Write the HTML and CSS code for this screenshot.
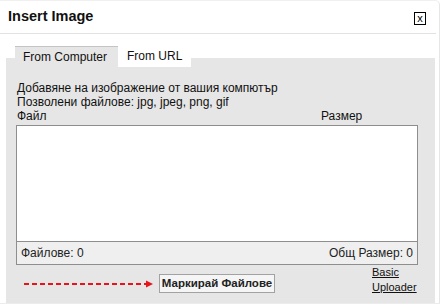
FILE: index.html
```html
<!DOCTYPE html>
<html>
<head>
<meta charset="utf-8">
<title>Insert Image</title>
<link rel="stylesheet" href="styles.css">
</head>
<body>
<div class="dialog">
  <div class="header">
    <div class="title">Insert Image</div>
    <div class="close">x</div>
  </div>
  <div class="body">
    <div class="tabs">
      <div class="tab tab-active">From Computer</div>
      <div class="tab tab-inactive">From URL</div>
    </div>
    <div class="panel">
      <div class="line">Добавяне на изображение от вашия компютър</div>
      <div class="line">Позволени файлове: jpg, jpeg, png, gif</div>
      <div class="cols">
        <span class="col-name">Файл</span>
        <span class="col-size">Размер</span>
      </div>
      <div class="filebox">
        <div class="filelist"></div>
        <div class="status">
          <span>Файлове: 0</span>
          <span>Общ Размер: 0</span>
        </div>
      </div>
      <div class="actions">
        <svg class="arrow" width="130" height="10" viewBox="0 0 130 10">
          <line x1="0" y1="5" x2="123" y2="5" stroke="#e8141c" stroke-width="2.2" stroke-dasharray="5 3"/>
          <polygon points="122,1.5 129,5 122,8.5" fill="#e8141c"/>
        </svg>
        <div class="btn">Маркирай Файлове</div>
        <div class="basic"><a href="#">Basic</a><br><a href="#">Uploader</a></div>
      </div>
    </div>
  </div>
</div>
</body>
</html>
```

FILE: styles.css
```css
html, body {
  margin: 0;
  padding: 0;
  background: #ffffff;
}
body {
  font-family: "Liberation Sans", Arial, sans-serif;
  font-size: 12px;
  color: #111;
  width: 442px;
  height: 306px;
  overflow: hidden;
}
.dialog {
  width: 440px;
  height: 304px;
  border-right: 1px solid #e6e6e6;
  border-top: 1px solid #f0f0f0;
  border-bottom: 1px solid #ececec;
  border-top-right-radius: 5px;
  box-sizing: border-box;
}
.header {
  display: flex;
  height: 32px;
  border-bottom: 1px solid #e2e2e2;
  margin-right: 3px;
}
.title {
  flex: 1;
  font-weight: bold;
  font-size: 14.5px;
  line-height: 31px;
  padding-left: 8px;
  color: #111;
}
.close {
  margin-top: 11px;
  margin-right: 10px;
  width: 10px;
  height: 11px;
  border: 1px solid #000;
  font-size: 11px;
  line-height: 10px;
  text-align: center;
  color: #000;
}
.body {
  padding: 0 4px 0 6px;
}
.tabs {
  display: flex;
  height: 12px;
  margin-top: 12px;
  padding-left: 9px;
}
.tab {
  position: relative;
  z-index: 1;
  height: 21px;
  line-height: 21px;
  box-sizing: border-box;
  color: #111;
}
.tab-active {
  width: 103px;
  background: #e6e6e6;
  border-top: 1px solid #c4c4c4;
  padding-left: 8px;
  line-height: 20px;
}
.tab-inactive {
  width: 73px;
  background: #ffffff;
  padding-left: 9px;
}
.panel {
  width: 429px;
  height: 245px;
  background: #e6e6e6;
  box-sizing: border-box;
  padding: 23px 0 0 10px;
}
.line {
  line-height: 14px;
  padding-left: 1px;
}
.cols {
  display: flex;
  width: 402px;
  line-height: 14px;
  padding-left: 1px;
  box-sizing: border-box;
}
.col-name {
  flex: 1;
}
.col-size {
  width: 97px;
}
.filebox {
  margin-top: 2px;
  width: 402px;
  border: 1px solid #8e8e8e;
  box-sizing: border-box;
}
.filelist {
  height: 115px;
  background: #ffffff;
}
.status {
  display: flex;
  justify-content: space-between;
  height: 22px;
  line-height: 22px;
  border-top: 1px solid #8e8e8e;
  background: #efefef;
  padding: 0 4px 0 4px;
  color: #222;
}
.actions {
  display: flex;
  width: 402px;
  height: 38px;
}
.arrow {
  flex: none;
  margin-left: 8px;
  margin-top: 14px;
}
.btn {
  flex: none;
  white-space: nowrap;
  margin-left: 5px;
  margin-top: 9px;
  height: 19px;
  width: 116px;
  box-sizing: border-box;
  border: 1px solid #a2a2a2;
  background: #f5f5f5;
  font-weight: bold;
  font-size: 11.5px;
  line-height: 17px;
  text-align: center;
  color: #222;
}
.basic {
  margin-left: auto;
  width: 46px;
  font-size: 11px;
  line-height: 15px;
}
.basic a {
  color: #111;
  text-decoration: underline;
}
```
